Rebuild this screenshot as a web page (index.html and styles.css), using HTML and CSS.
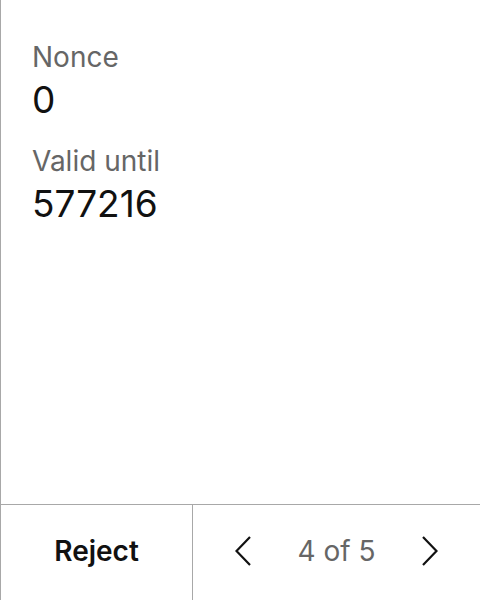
FILE: index.html
```html
<!DOCTYPE html>
<html>
<head>
<meta charset="utf-8">
<link rel="stylesheet" href="styles.css">
</head>
<body>
<div class="screen">
  <div class="content">
    <div class="field">
      <div class="label">Nonce</div>
      <div class="value">0</div>
    </div>
    <div class="field">
      <div class="label">Valid until</div>
      <div class="value">577216</div>
    </div>
  </div>
  <div class="footer">
    <div class="reject">Reject</div>
    <div class="pager">
      <svg class="chev" width="16" height="30" viewBox="0 0 16 30"><path d="M15 1 L1.5 15 L15 29" fill="none" stroke="#111" stroke-width="2.2"/></svg>
      <span class="count">4 of 5</span>
      <svg class="chev" width="16" height="30" viewBox="0 0 16 30"><path d="M1 1 L14.5 15 L1 29" fill="none" stroke="#111" stroke-width="2.2"/></svg>
    </div>
  </div>
</div>
</body>
</html>
```

FILE: styles.css
```css
* { box-sizing: border-box; }
html, body { margin: 0; padding: 0; background: #fff; }
body { font-family: Inter, "Noto Sans", sans-serif; }
.screen {
  width: 480px;
  height: 600px;
  display: flex;
  flex-direction: column;
  border-left: 1px solid #a8a8a8;
}
.content {
  flex: 1;
  padding: 37px 0 0 31px;
  display: flex;
  flex-direction: column;
  gap: 18px;
}
.label {
  font-size: 28px;
  line-height: 40px;
  color: #666;
}
.value {
  font-size: 37px;
  line-height: 46px;
  color: #111;
}
.footer {
  height: 96px;
  border-top: 1px solid #a8a8a8;
  display: grid;
  grid-template-columns: 192px 1fr;
}
.reject {
  border-right: 1px solid #a8a8a8;
  display: flex;
  align-items: center;
  justify-content: center;
  padding-bottom: 3px;
  font-size: 28px;
  font-weight: 600;
  color: #111;
}
.pager {
  display: flex;
  align-items: center;
  justify-content: center;
  padding-bottom: 3px;
  gap: 46px;
}
.count {
  font-size: 28px;
  color: #666;
}
.chev { display: block; }
```
